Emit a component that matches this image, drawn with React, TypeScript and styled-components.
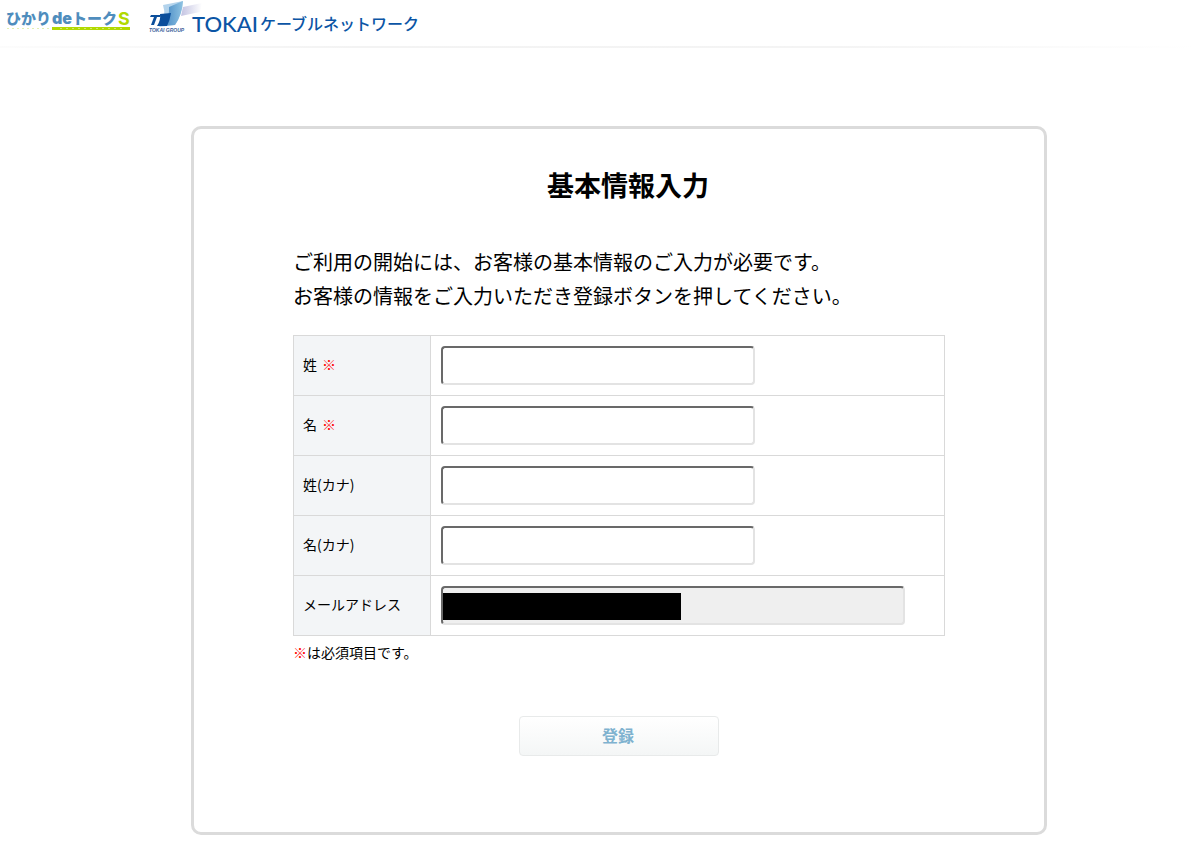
import React from 'react';
import styled, { createGlobalStyle } from 'styled-components';

const GlobalStyle = createGlobalStyle`
  *, *::before, *::after { box-sizing: border-box; }
  body {
    margin: 0;
    background: #fff;
    color: #000;
    font-family: "Noto Sans CJK JP", "Noto Sans", sans-serif;
    font-size: 14px;
    line-height: 20px;
  }
`;

const Header = styled.header`
  display: flex;
  align-items: flex-start;
  height: 48px;
  border-bottom: 2px solid;
  border-image: linear-gradient(to right, #fcfcfc, #f3f3f3 30%, #f4f4f4 70%, #fff) 2;
`;

const LogoLink = styled.a`
  display: block;
  line-height: 0;
`;

const Main = styled.main`
  padding: 78px 147px 24px 191px;
`;

const Card = styled.section`
  min-height: 709px;
  padding: 36px 99px 75px;
  border: 3px solid #dbdbdb;
  border-radius: 10px;
`;

const Title = styled.h1`
  margin: 0 0 40px;
  padding-left: 18px;
  font-size: 27px;
  line-height: 40px;
  font-weight: 700;
  text-align: center;
`;

const Lead = styled.p`
  margin: 0 0 22px;
  font-size: 20px;
  line-height: 34px;
`;

const FormTable = styled.table`
  width: 100%;
  border-collapse: collapse;
  border: 1px solid #d9d9d9;
`;

const LabelCell = styled.th`
  width: 137px;
  height: 60px;
  padding: 0 9px 4px;
  border: 1px solid #d9d9d9;
  background: #f3f5f7;
  font-weight: 400;
  text-align: left;
`;

const FieldCell = styled.td`
  padding: 0 10px;
  border: 1px solid #d9d9d9;
`;

const TextInput = styled.input<{ $wide?: boolean }>`
  display: block;
  width: ${(p) => (p.$wide ? 464 : 314)}px;
  max-width: 100%;
  height: 39px;
  padding: 0 8px;
  border: 2px solid;
  border-color: #696969 #e3e3e3 #e3e3e3 #696969;
  border-radius: 4px;
  background: #fff;
  font: inherit;

  &:disabled {
    background: linear-gradient(#000, #000) 0 5px / 238px 27px no-repeat #efefef;
  }
`;

const Mark = styled.span`
  color: #f00;

  label > & {
    margin-left: 5px;
  }
`;

const Note = styled.p`
  margin: 6px 0 54px;
`;

const SubmitButton = styled.button`
  display: block;
  width: 200px;
  height: 40px;
  margin: 0 auto;
  padding: 0 2px 2px 0;
  border: 1px solid #e8eaea;
  border-radius: 4px;
  background: linear-gradient(#fff, #f4f6f6);
  color: #7fb2cf;
  font: inherit;
  font-size: 16px;
  font-weight: 700;
`;

const fields = [
  { id: 'sei', label: '姓', required: true },
  { id: 'mei', label: '名', required: true },
  { id: 'sei-kana', label: '姓(カナ)' },
  { id: 'mei-kana', label: '名(カナ)' },
  { id: 'mail', label: 'メールアドレス', locked: true },
];

const HikariLogo = () => (
  <svg width="142" height="38" viewBox="0 0 142 38" role="img" aria-label="ひかりdeトークS">
    <g fontFamily="'Noto Sans CJK JP', sans-serif" fontWeight="900" fill="#4f8dbd">
      <text x="6" y="24" fontSize="15">ひかり</text>
      <text x="52" y="24" fontSize="16" fontFamily="Inter, sans-serif">de</text>
      <text x="72" y="24" fontSize="15">トーク</text>
      <text x="118" y="25" fontSize="18" fontWeight="700" fill="#b1d900" fontFamily="Inter, sans-serif">S</text>
    </g>
    <rect x="52" y="27" width="78" height="3" fill="#b1d900" />
    <path d="M60 28.5h65" stroke="#d3ea70" strokeDasharray="2 4" />
    <path d="M7 28.5h44" stroke="#e3f0b0" strokeDasharray="2 3" />
  </svg>
);

const TokaiLogo = () => (
  <svg width="280" height="38" viewBox="0 0 280 38" role="img" aria-label="TOKAIケーブルネットワーク">
    <defs>
      <linearGradient id="trail" x1="0" x2="1">
        <stop offset="0" stopColor="#c3c3e2" />
        <stop offset="1" stopColor="#fff" />
      </linearGradient>
      <linearGradient id="sheet" x1="0" x2="1">
        <stop offset="0" stopColor="#3f83c1" />
        <stop offset="1" stopColor="#8fc3e2" />
      </linearGradient>
    </defs>
    <path d="M41 7L60 3L58 12L39 16Z" fill="url(#trail)" />
    <path d="M21 5L41 1Q40 15 33 25L17 27Q25 17 21 5Z" fill="#b3d3ec" />
    <path d="M27 7L41 1Q40 15 33 25L20 26Q28 18 27 7Z" fill="url(#sheet)" />
    <path d="M18 14L29 13Q28 20 25 26L15 26Q19 20 18 14Z" fill="#0b4e9b" />
    <path d="M9 15H19L18 17H15L12 25H9L12 17H8Z" fill="#0b4e9b" />
    <text x="7" y="32" fontSize="5" fontWeight="700" fontStyle="italic" fontFamily="'Liberation Sans', sans-serif" fill="#3c5f9a">TOKAI GROUP</text>
    <g fill="#0b55a5">
      <text x="50" y="32" fontSize="22" fontFamily="Lato, sans-serif" fontWeight="500">TOKAI</text>
      <text x="118" y="30" fontSize="16" fontFamily="'Noto Sans CJK JP', sans-serif" fontWeight="500">ケーブルネットワーク</text>
    </g>
  </svg>
);

export default function App() {
  return (
    <>
      <GlobalStyle />
      <Header>
        <LogoLink href="#hikari"><HikariLogo /></LogoLink>
        <LogoLink href="#tokai"><TokaiLogo /></LogoLink>
      </Header>
      <Main>
        <Card>
          <Title>基本情報入力</Title>
          <Lead>
            ご利用の開始には、お客様の基本情報のご入力が必要です。
            <br />
            お客様の情報をご入力いただき登録ボタンを押してください。
          </Lead>
          <form onSubmit={(e) => e.preventDefault()}>
            <FormTable>
              <tbody>
                {fields.map((f) => (
                  <tr key={f.id}>
                    <LabelCell scope="row">
                      <label htmlFor={f.id}>
                        {f.label}
                        {f.required && <Mark>※</Mark>}
                      </label>
                    </LabelCell>
                    <FieldCell>
                      <TextInput id={f.id} type="text" $wide={f.locked} disabled={f.locked} />
                    </FieldCell>
                  </tr>
                ))}
              </tbody>
            </FormTable>
            <Note><Mark>※</Mark>は必須項目です。</Note>
            <SubmitButton type="submit">登録</SubmitButton>
          </form>
        </Card>
      </Main>
    </>
  );
}
